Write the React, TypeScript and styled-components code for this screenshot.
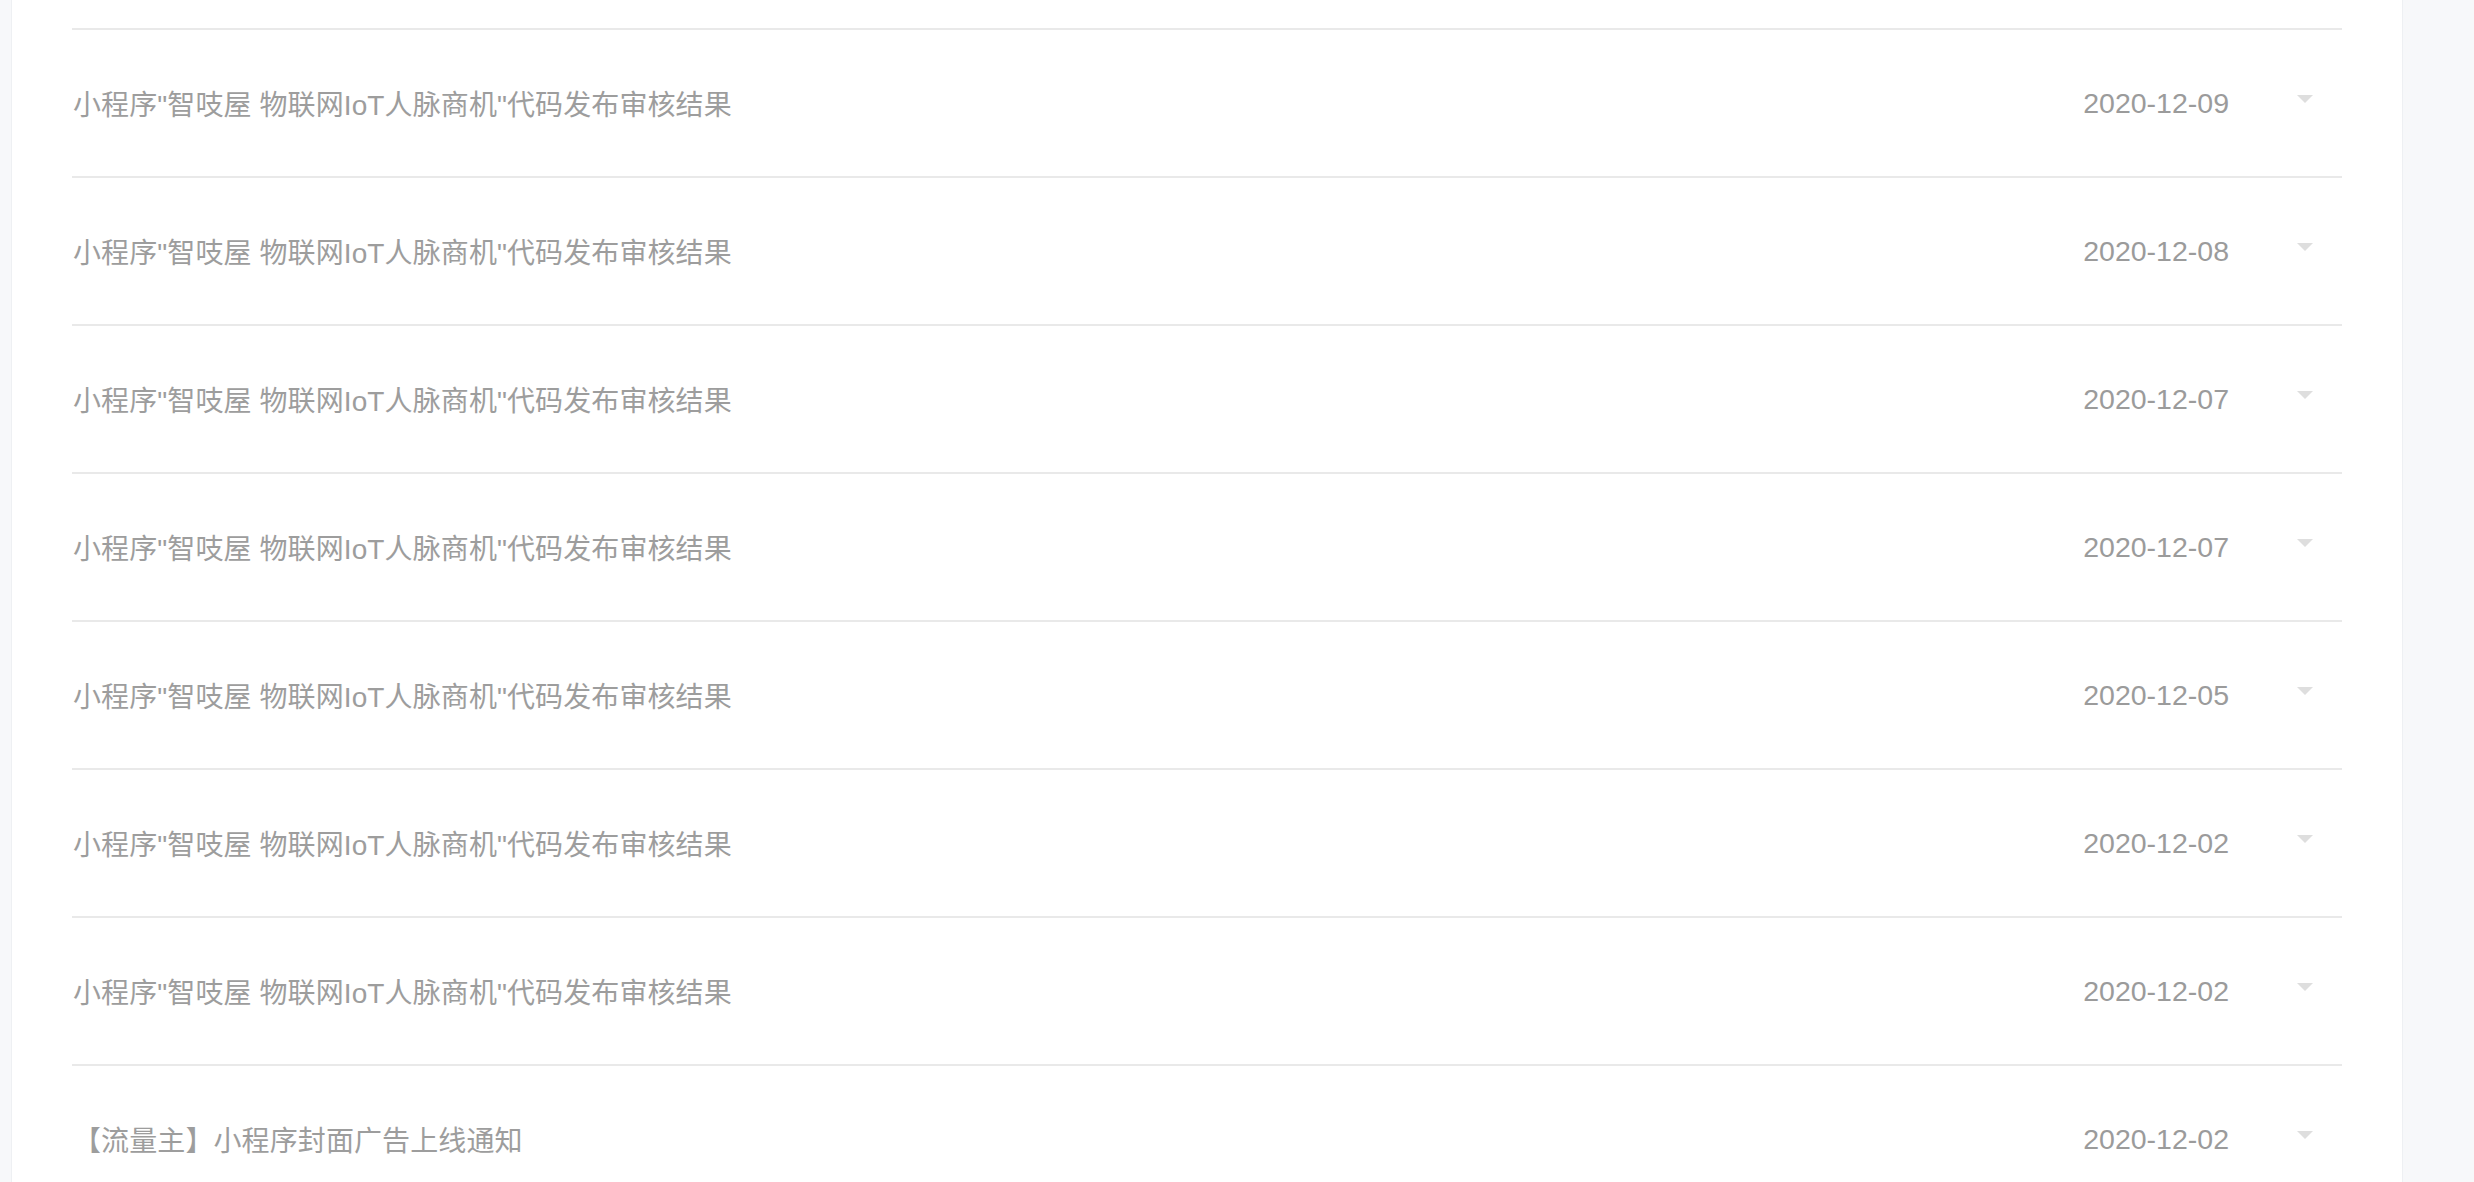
import React from "react";
import styled, { createGlobalStyle } from "styled-components";

const GlobalStyle = createGlobalStyle`
  html, body {
    margin: 0;
    padding: 0;
    height: 100%;
    overflow: hidden;
    background: #f7f8fa;
    font-family: "Liberation Sans", "Noto Sans CJK SC", sans-serif;
  }
`;

const Page = styled.div`
  display: flex;
  min-height: 1182px;
  padding: 0 72px 0 12px;
  background: #f7f8fa;
`;

const Panel = styled.main`
  flex: 1;
  background: #ffffff;
  padding: 28px 60px 0 60px;
  box-shadow: 1px 0 0 #eef0f3, -1px 0 0 #eef0f3;
`;

const List = styled.ul`
  list-style: none;
  margin: 0;
  padding: 0;
`;

const Row = styled.li`
  display: flex;
  align-items: center;
  height: 146px;
  border-top: 2px solid #e9e9e9;
  padding: 0 29px 0 1px;
`;

const Title = styled.span`
  flex: 1;
  font-size: 28px;
  letter-spacing: 0.1px;
  color: #9d9d9d;
  font-family: "Liberation Sans", "Noto Sans CJK SC", sans-serif;
  white-space: nowrap;
`;

const DateText = styled.span`
  font-size: 28.5px;
  color: #9b9b9b;
  font-family: "Liberation Sans", Arial, sans-serif;
  margin-right: 68px;
`;

const Caret = styled.span`
  width: 0;
  height: 0;
  margin-top: -9px;
  border-left: 8px solid transparent;
  border-right: 8px solid transparent;
  border-top: 8px solid #dedede;
`;

const items: { title: string; date: string }[] = [
  { title: '小程序"智吱屋 物联网IoT人脉商机"代码发布审核结果', date: "2020-12-09" },
  { title: '小程序"智吱屋 物联网IoT人脉商机"代码发布审核结果', date: "2020-12-08" },
  { title: '小程序"智吱屋 物联网IoT人脉商机"代码发布审核结果', date: "2020-12-07" },
  { title: '小程序"智吱屋 物联网IoT人脉商机"代码发布审核结果', date: "2020-12-07" },
  { title: '小程序"智吱屋 物联网IoT人脉商机"代码发布审核结果', date: "2020-12-05" },
  { title: '小程序"智吱屋 物联网IoT人脉商机"代码发布审核结果', date: "2020-12-02" },
  { title: '小程序"智吱屋 物联网IoT人脉商机"代码发布审核结果', date: "2020-12-02" },
  { title: "【流量主】小程序封面广告上线通知", date: "2020-12-02" },
];

export default function App() {
  return (
    <>
      <GlobalStyle />
      <Page>
        <Panel>
          <List>
            {items.map((item, i) => (
              <Row key={i}>
                <Title>{item.title}</Title>
                <DateText>{item.date}</DateText>
                <Caret />
              </Row>
            ))}
          </List>
        </Panel>
      </Page>
    </>
  );
}
